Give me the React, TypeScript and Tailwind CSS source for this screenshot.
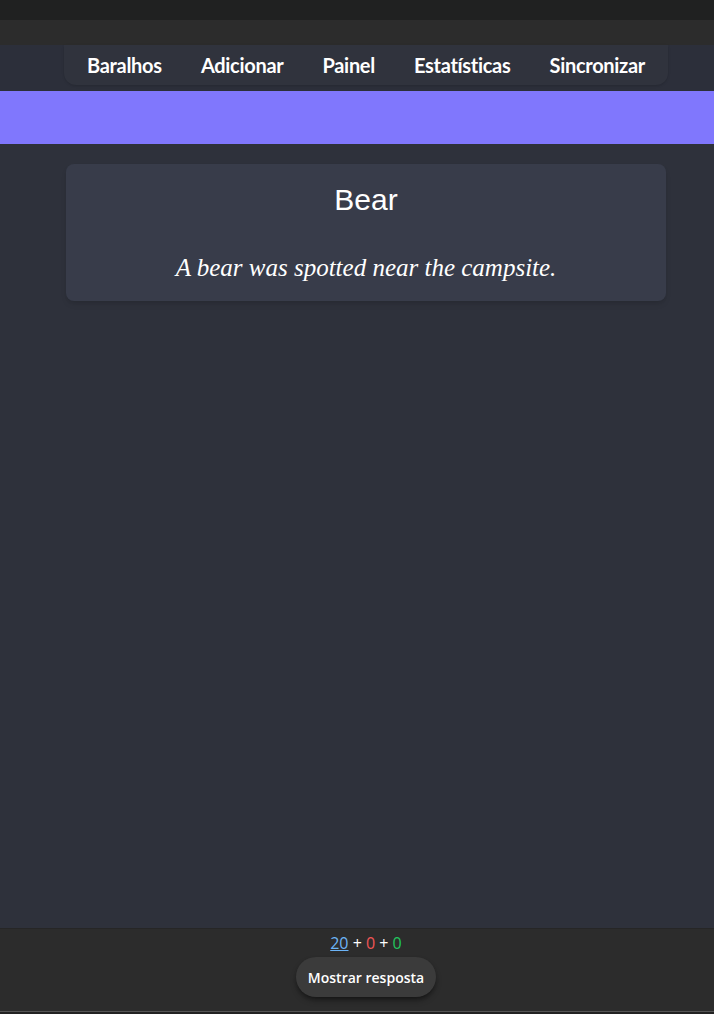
const navItems = ["Baralhos", "Adicionar", "Painel", "Estatísticas", "Sincronizar"];

export default function App() {
  return (
    <div className="flex flex-col h-screen overflow-hidden bg-[#2e313b] font-['Lato','Open_Sans',sans-serif]">
      <div className="h-[20px] shrink-0 bg-[#202121]" />
      <div className="h-[25px] shrink-0 bg-[#2c2c2c]" />
      <div className="h-[46px] shrink-0 bg-[#2c2f3a]">
        <nav className="ml-[64px] w-[604px] h-[40px] rounded-b-xl bg-[#30333d] shadow-sm flex items-center justify-between px-[23px]">
          {navItems.map((item) => (
            <span key={item} className="text-white font-bold text-[20px] leading-none tracking-[-0.3px]">
              {item}
            </span>
          ))}
        </nav>
      </div>
      <div className="h-[53px] shrink-0 bg-[#8077fd]" />
      <main className="flex-1 pt-[20px]">
        <div className="ml-[66px] w-[600px] h-[137px] rounded-lg bg-[#383c4a] shadow-md flex flex-col items-center pt-[18px]">
          <h1 className="text-white text-[30px] leading-[36px] font-['Liberation_Sans',Arial,sans-serif]">
            Bear
          </h1>
          <p className="mt-[35px] text-white italic text-[25px] leading-[30px] font-['Liberation_Serif','Times_New_Roman',serif]">
            A bear was spotted near the campsite.
          </p>
        </div>
      </main>
      <footer className="h-[86px] shrink-0 border-t border-[#262626] bg-[#2c2c2c] flex flex-col font-['Open_Sans',sans-serif]">
        <div className="w-[732px] flex flex-col items-center">
          <div className="mt-[3px] text-[16px] leading-[22px] text-white whitespace-pre">
            <span className="text-[#6cb4f7] underline">20</span>{" + "}
            <span className="text-[#f05555]">0</span>{" + "}
            <span className="text-[#22c55e]">0</span>
          </div>
          <button className="mt-[3px] w-[140px] h-[40px] rounded-[20px] bg-[#3b3b3b] text-white text-[14px] font-semibold shadow-md shadow-black/40">
            Mostrar resposta
          </button>
        </div>
        <div className="mt-auto h-[3px] border-t border-[#555555] bg-[#222222]" />
      </footer>
    </div>
  );
}
